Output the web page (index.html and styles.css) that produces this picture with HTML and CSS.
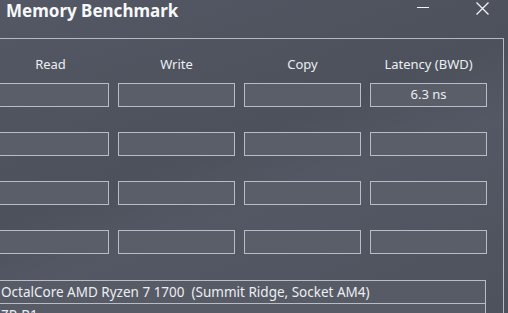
FILE: index.html
```html
<!DOCTYPE html>
<html>
<head>
<meta charset="utf-8">
<link rel="stylesheet" href="styles.css">
</head>
<body>
<div class="window">
  <header class="titlebar">
    <h1 class="title">Memory Benchmark</h1>
    <div class="controls">
      <svg class="ctl-min" width="12" height="2" viewBox="0 0 12 2"><rect x="0" y="0" width="12" height="1" fill="#f2f3f5"/></svg>
      <svg class="ctl-close" width="13" height="13" viewBox="0 0 13 13"><path d="M0.5 0.5 L12.5 12.5 M12.5 0.5 L0.5 12.5" stroke="#f2f3f5" stroke-width="1.3" fill="none"/></svg>
    </div>
  </header>
  <section class="group">
    <div class="heads">
      <div class="head">Read</div>
      <div class="head">Write</div>
      <div class="head">Copy</div>
      <div class="head">Latency (BWD)</div>
    </div>
    <div class="grid">
      <div class="cell"></div><div class="cell"></div><div class="cell"></div><div class="cell">6.3 ns</div>
      <div class="cell"></div><div class="cell"></div><div class="cell"></div><div class="cell"></div>
      <div class="cell"></div><div class="cell"></div><div class="cell"></div><div class="cell"></div>
      <div class="cell"></div><div class="cell"></div><div class="cell"></div><div class="cell"></div>
    </div>
    <div class="info">
      <div class="info-row">OctalCore AMD Ryzen 7 1700&nbsp; (Summit Ridge, Socket AM4)</div>
      <div class="info-row">ZP-B1</div>
    </div>
  </section>
</div>
</body>
</html>
```

FILE: styles.css
```css
html, body {
  margin: 0;
  padding: 0;
}
body {
  width: 508px;
  height: 313px;
  overflow: hidden;
  background: #4e535e;
}
.window {
  width: 508px;
  height: 313px;
  overflow: hidden;
  background: linear-gradient(160deg, #535864 0%, #4c515c 45%, #535864 60%, #4d525d 100%);
  font-family: "Noto Sans", "Open Sans", sans-serif;
  color: #eceef2;
}
.titlebar {
  height: 38px;
  display: flex;
  align-items: flex-start;
  justify-content: space-between;
}
.title {
  margin: 0;
  padding: 0 0 0 6px;
  font-size: 17px;
  line-height: 22px;
  font-weight: 700;
  color: #f7f8fa;
}
.controls {
  display: flex;
  align-items: flex-start;
  padding-right: 19px;
}
.ctl-min {
  margin-top: 7px;
  margin-right: 47px;
}
.ctl-close {
  margin-top: 2px;
}
.group {
  margin-left: -10px;
  width: 511px;
  height: 290px;
  border-top: 1px solid #b4b8c1;
  border-right: 1px solid #b4b8c1;
  padding-left: 2px;
}
.heads,
.grid {
  display: grid;
  grid-template-columns: 117px 117px 117px 117px;
  column-gap: 9px;
}
.heads {
  height: 44px;
  align-items: center;
}
.grid {
  grid-auto-rows: 24px;
  row-gap: 25px;
}
.head {
  text-align: center;
  font-size: 13px;
  line-height: 18px;
  padding-top: 6px;
  color: #eceef2;
}
.cell {
  box-sizing: border-box;
  height: 24px;
  border: 1px solid #b8bcc5;
  background: #5a5e69;
  text-align: center;
  font-size: 13px;
  line-height: 21px;
  color: #eceef2;
}
.info {
  margin-top: 26px;
  width: 494px;
  box-sizing: border-box;
  border: 1px solid #b8bcc5;
  border-left: none;
  background: #575b66;
}
.info-row {
  height: 22px;
  border-bottom: 1px solid #b8bcc5;
  padding-left: 9px;
  font-size: 13.5px;
  line-height: 22px;
  white-space: nowrap;
  color: #eceef2;
}
```
